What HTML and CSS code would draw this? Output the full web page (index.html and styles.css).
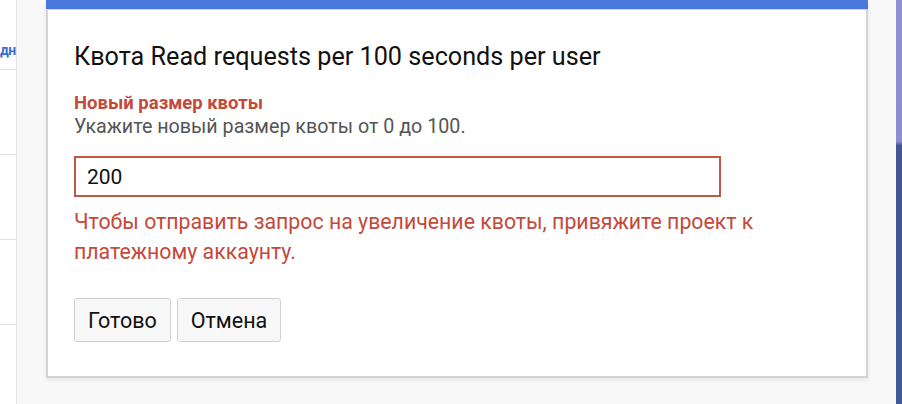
FILE: index.html
```html
<!DOCTYPE html>
<html>
<head>
    <title>Квота</title>
    <link rel="stylesheet" href="styles.css">
</head>
<body>
    <div class="page">
        <div class="sidebar">
            <div class="side-link">дн</div>
            <div class="side-row"></div>
            <div class="side-row"></div>
            <div class="side-row"></div>
        </div>
        <div class="backdrop">
            <div class="dialog">
                <div class="dialog-bar"></div>
                <div class="dialog-body">
                    <h1 class="dialog-title">Квота Read requests per 100 seconds per user</h1>
                    <div class="field-label">Новый размер квоты</div>
                    <div class="field-hint">Укажите новый размер квоты от 0 до 100.</div>
                    <input class="field-input" type="text" value="200">
                    <p class="field-error">Чтобы отправить запрос на увеличение квоты, привяжите проект к платежному аккаунту.</p>
                    <div class="actions">
                        <button class="btn">Готово</button>
                        <button class="btn">Отмена</button>
                    </div>
                </div>
            </div>
        </div>
        <div class="wallpaper"></div>
    </div>
</body>
</html>
```

FILE: styles.css
```css
body {
    margin: 0;
    padding: 0;
    font-family: Roboto, "Liberation Sans", Arial, sans-serif;
    background-color: #f8f8f8;
}
.page {
    display: flex;
    height: 404px;
    overflow: hidden;
}
.sidebar {
    width: 16px;
    background-color: #fff;
    border-right: 1px solid #e4e4e4;
    flex-shrink: 0;
}
.side-link {
    color: #3b6fd0;
    font-weight: bold;
    font-size: 14px;
    letter-spacing: -0.6px;
    height: 70px;
    line-height: 100px;
    border-bottom: 1px solid #e0e0e0;
    box-sizing: border-box;
    white-space: nowrap;
}
.side-row {
    height: 84px;
    border-bottom: 1px solid #e0e0e0;
}
.backdrop {
    flex: 1;
    padding-left: 29px;
    padding-right: 28px;
}
.dialog {
    background-color: #fff;
    border: 2px solid #d4d4d4;
    border-top: none;
    height: 378px;
    box-sizing: border-box;
    box-shadow: 0 2px 4px rgba(0, 0, 0, 0.08);
}
.dialog-bar {
    height: 9px;
    margin: 0 -2px;
    background-color: #4a78db;
    border-bottom: 1px solid #c9d4ea;
}
.dialog-body {
    padding: 30px 26px 0 26px;
}
.dialog-title {
    margin: 0;
    font-size: 25.2px;
    font-weight: normal;
    color: #111;
    line-height: 33px;
}
.field-label {
    margin-top: 19px;
    color: #c4493b;
    font-weight: bold;
    font-size: 18.5px;
    line-height: 23px;
}
.field-hint {
    color: #555;
    font-size: 19.7px;
    line-height: 23px;
}
.field-input {
    display: block;
    margin-top: 18px;
    width: 647px;
    height: 41px;
    box-sizing: border-box;
    border: 2px solid #c0574b;
    border-radius: 0;
    padding: 0 11px;
    font-family: inherit;
    font-size: 21px;
    color: #111;
    outline: none;
}
.field-error {
    margin: 10px 0 0 0;
    color: #c4493b;
    font-size: 21.3px;
    line-height: 30px;
    width: 700px;
}
.actions {
    margin-top: 31px;
    display: flex;
    gap: 6px;
}
.btn {
    height: 44px;
    padding: 0 13px;
    background-color: #f8f8f8;
    border: 1px solid #d0d0d0;
    border-radius: 3px;
    font-family: inherit;
    font-size: 21.5px;
    color: #111;
}
.wallpaper {
    width: 6px;
    flex-shrink: 0;
    background: linear-gradient(#8f8fd0 0%, #8d8ccc 35%, #45558f 36%, #3f5a96 100%);
}
```
